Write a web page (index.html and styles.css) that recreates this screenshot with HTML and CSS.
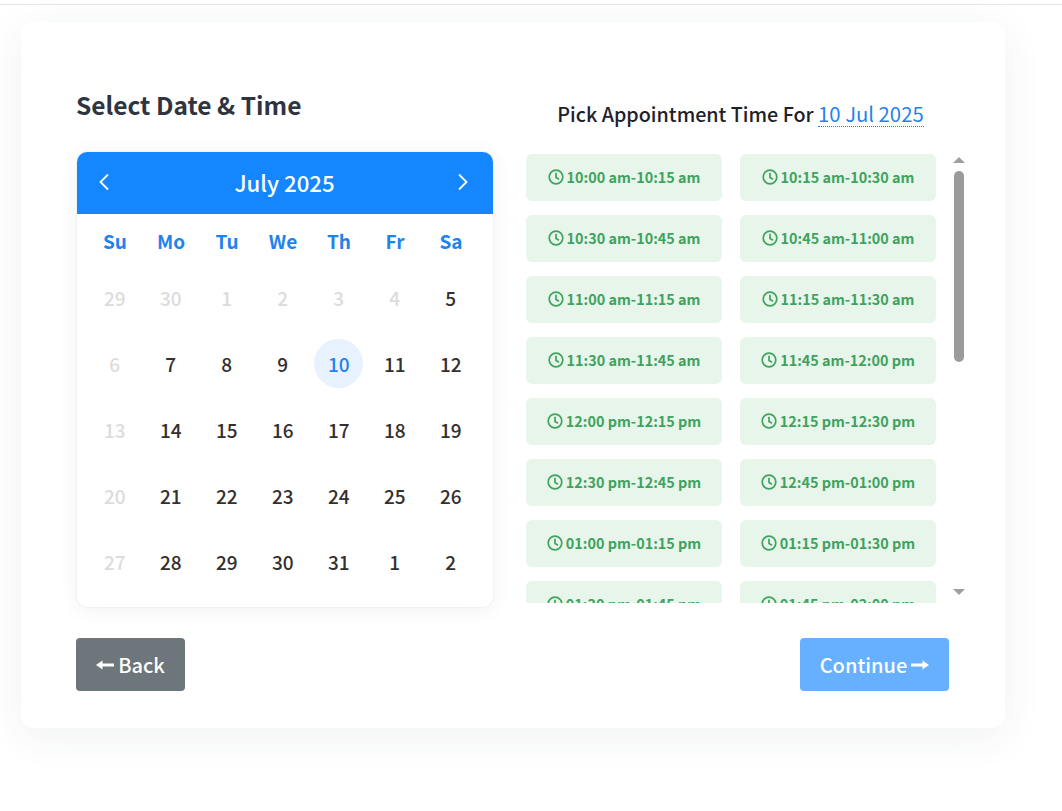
FILE: index.html
```html
<!DOCTYPE html>
<html lang="en">
<head>
<meta charset="utf-8">
<title>Select Date &amp; Time</title>
<link rel="stylesheet" href="styles.css">
</head>
<body>
<div class="topline"></div>
<main class="card">
  <div class="columns">
    <section class="left">
      <h2 class="title">Select Date &amp; Time</h2>
      <div class="calendar">
        <div class="cal-head">
          <svg class="chev" width="14" height="20" viewBox="0 0 14 20"><path d="M11 2.5 3.5 10 11 17.5" fill="none" stroke="#fff" stroke-width="1.8"/></svg>
          <span class="month">July 2025</span>
          <svg class="chev" width="14" height="20" viewBox="0 0 14 20"><path d="M3 2.5 10.5 10 3 17.5" fill="none" stroke="#fff" stroke-width="1.8"/></svg>
        </div>
        <div class="weekdays">
          <span>Su</span><span>Mo</span><span>Tu</span><span>We</span><span>Th</span><span>Fr</span><span>Sa</span>
        </div>
        <div class="days">
          <span class="off">29</span><span class="off">30</span><span class="off">1</span><span class="off">2</span><span class="off">3</span><span class="off">4</span><span>5</span>
          <span class="off">6</span><span>7</span><span>8</span><span>9</span><span class="sel">10</span><span>11</span><span>12</span>
          <span class="off">13</span><span>14</span><span>15</span><span>16</span><span>17</span><span>18</span><span>19</span>
          <span class="off">20</span><span>21</span><span>22</span><span>23</span><span>24</span><span>25</span><span>26</span>
          <span class="off">27</span><span>28</span><span>29</span><span>30</span><span>31</span><span>1</span><span>2</span>
        </div>
      </div>
    </section>
    <section class="right">
      <h3 class="pick">Pick Appointment Time For <span class="pick-date">10 Jul 2025</span></h3>
      <div class="slots-wrap">
        <div class="slots">
          <div class="slot"><svg class="clock" viewBox="0 0 16 16"><circle cx="8" cy="8" r="6.8"/><path d="M8 3.8V8.4L11 10.2"/></svg>10:00 am-10:15 am</div>
          <div class="slot"><svg class="clock" viewBox="0 0 16 16"><circle cx="8" cy="8" r="6.8"/><path d="M8 3.8V8.4L11 10.2"/></svg>10:15 am-10:30 am</div>
          <div class="slot"><svg class="clock" viewBox="0 0 16 16"><circle cx="8" cy="8" r="6.8"/><path d="M8 3.8V8.4L11 10.2"/></svg>10:30 am-10:45 am</div>
          <div class="slot"><svg class="clock" viewBox="0 0 16 16"><circle cx="8" cy="8" r="6.8"/><path d="M8 3.8V8.4L11 10.2"/></svg>10:45 am-11:00 am</div>
          <div class="slot"><svg class="clock" viewBox="0 0 16 16"><circle cx="8" cy="8" r="6.8"/><path d="M8 3.8V8.4L11 10.2"/></svg>11:00 am-11:15 am</div>
          <div class="slot"><svg class="clock" viewBox="0 0 16 16"><circle cx="8" cy="8" r="6.8"/><path d="M8 3.8V8.4L11 10.2"/></svg>11:15 am-11:30 am</div>
          <div class="slot"><svg class="clock" viewBox="0 0 16 16"><circle cx="8" cy="8" r="6.8"/><path d="M8 3.8V8.4L11 10.2"/></svg>11:30 am-11:45 am</div>
          <div class="slot"><svg class="clock" viewBox="0 0 16 16"><circle cx="8" cy="8" r="6.8"/><path d="M8 3.8V8.4L11 10.2"/></svg>11:45 am-12:00 pm</div>
          <div class="slot"><svg class="clock" viewBox="0 0 16 16"><circle cx="8" cy="8" r="6.8"/><path d="M8 3.8V8.4L11 10.2"/></svg>12:00 pm-12:15 pm</div>
          <div class="slot"><svg class="clock" viewBox="0 0 16 16"><circle cx="8" cy="8" r="6.8"/><path d="M8 3.8V8.4L11 10.2"/></svg>12:15 pm-12:30 pm</div>
          <div class="slot"><svg class="clock" viewBox="0 0 16 16"><circle cx="8" cy="8" r="6.8"/><path d="M8 3.8V8.4L11 10.2"/></svg>12:30 pm-12:45 pm</div>
          <div class="slot"><svg class="clock" viewBox="0 0 16 16"><circle cx="8" cy="8" r="6.8"/><path d="M8 3.8V8.4L11 10.2"/></svg>12:45 pm-01:00 pm</div>
          <div class="slot"><svg class="clock" viewBox="0 0 16 16"><circle cx="8" cy="8" r="6.8"/><path d="M8 3.8V8.4L11 10.2"/></svg>01:00 pm-01:15 pm</div>
          <div class="slot"><svg class="clock" viewBox="0 0 16 16"><circle cx="8" cy="8" r="6.8"/><path d="M8 3.8V8.4L11 10.2"/></svg>01:15 pm-01:30 pm</div>
          <div class="slot"><svg class="clock" viewBox="0 0 16 16"><circle cx="8" cy="8" r="6.8"/><path d="M8 3.8V8.4L11 10.2"/></svg>01:30 pm-01:45 pm</div>
          <div class="slot"><svg class="clock" viewBox="0 0 16 16"><circle cx="8" cy="8" r="6.8"/><path d="M8 3.8V8.4L11 10.2"/></svg>01:45 pm-02:00 pm</div>
        </div>
        <div class="scrollbar">
          <span class="arrow-up"></span>
          <span class="thumb"></span>
          <span class="arrow-down"></span>
        </div>
      </div>
    </section>
  </div>
  <div class="actions">
    <button class="btn back" type="button"><svg class="arrow" width="18" height="12" viewBox="0 0 18 12"><path d="M18 4.5H5V7.5H18ZM6.5 1.5 0 6 6.5 10.5Z" fill="#fff"/></svg>Back</button>
    <button class="btn next" type="button">Continue<svg class="arrow" width="18" height="12" viewBox="0 0 18 12"><path d="M0 4.5H13V7.5H0ZM11.5 1.5 18 6 11.5 10.5Z" fill="#fff"/></svg></button>
  </div>
</main>
</body>
</html>
```
FILE: styles.css
```css
* { box-sizing: border-box; }
html, body { margin: 0; padding: 0; }
body {
  background: #fff;
  font-family: "Noto Sans CJK SC", "Noto Sans", sans-serif;
  color: #2c3038;
  height: 811px;
  overflow: hidden;
}
.topline {
  height: 5px;
  background: #fff;
  border-bottom: 1px solid #e6e6e6;
}
.card {
  width: 984px;
  height: 706px;
  margin: 17px 0 0 21px;
  background: #fff;
  border-radius: 12px;
  box-shadow: 0 8px 40px rgba(40, 50, 60, .07);
  padding: 64px 56px 0 55px;
  display: flex;
  flex-direction: column;
}
.columns { display: flex; gap: 33px; }
.left { width: 417px; flex: none; padding-left: 1px; }
.right { width: 440px; flex: none; }
.title {
  margin: 0;
  font-size: 24.5px;
  font-weight: 600;
  line-height: 38px;
  height: 66px;
  margin-left: -1px;
  color: #2f3540;
}
.calendar {
  width: 416px;
  height: 455px;
  background: #fff;
  border-radius: 10px;
  box-shadow: 0 2px 20px rgba(40, 50, 60, .07), 0 0 0 1px rgba(40, 50, 60, .03);
}
.cal-head {
  height: 62px;
  background: #1486ff;
  border-radius: 10px 10px 0 0;
  display: flex;
  align-items: center;
  justify-content: space-between;
  padding: 0 23px 2px 20px;
  color: #fff;
}
.month { font-size: 22.2px; font-weight: 500; line-height: 30px; margin-left: 2px; }
.weekdays, .days {
  display: grid;
  grid-template-columns: repeat(7, 56px);
  padding-left: 10px;
}
.weekdays {
  height: 52px;
  align-items: center;
  color: #1f83ee;
  font-size: 19px;
  font-weight: 600;
  text-align: center;
}
.days {
  grid-auto-rows: 66px;
  font-size: 19px;
  font-weight: 500;
  color: #33302f;
  align-items: center;
  justify-items: center;
  margin-top: -2px;
  padding-left: 9.75px;
}
.days span {
  width: 49px;
  height: 49px;
  border-radius: 50%;
  display: flex;
  align-items: center;
  justify-content: center;
}
.days .off { color: #dcdcdc; }
.days .sel { background: #e7f2fe; color: #1f83ee; }
.pick {
  margin: 0;
  height: 68px;
  padding: 13px 11px 0 0;
  font-size: 19.7px;
  font-weight: 500;
  line-height: 30px;
  text-align: center;
  color: #1d2129;
}
.pick-date {
  color: #1f83ee;
  font-size: 20.3px;
  font-weight: 400;
  display: inline-block;
  line-height: 26px;
  border-bottom: 1px dotted #1f83ee;
}
.slots-wrap {
  display: flex;
  height: 451px;
  margin-top: -2px;
}
.slots {
  width: 410px;
  height: 451px;
  padding-top: 2px;
  overflow: hidden;
  display: grid;
  grid-template-columns: 196px 196px;
  grid-auto-rows: 47px;
  column-gap: 18px;
  row-gap: 14px;
  align-content: start;
}
.slot {
  background: #e8f5ea;
  border-radius: 6px;
  color: #3fa35f;
  font-size: 14.4px;
  font-weight: 600;
  display: flex;
  align-items: center;
  justify-content: center;
  gap: 3px;
  padding-bottom: 2px;
  white-space: nowrap;
}
.clock {
  width: 16px;
  height: 16px;
  fill: none;
  stroke: #3fa35f;
  stroke-width: 1.7;
}
.scrollbar {
  width: 30px;
  padding: 5px 0 0 16px;
  display: flex;
  flex-direction: column;
  align-items: center;
}
.arrow-up, .arrow-down { width: 0; height: 0; border-left: 6px solid transparent; border-right: 6px solid transparent; }
.arrow-up { border-bottom: 6px solid #a0a0a0; }
.arrow-down { border-top: 6px solid #a0a0a0; margin-top: 227px; }
.thumb { width: 10px; height: 191px; margin-top: 8px; background: #9b9b9b; border-radius: 5px; }
.actions {
  display: flex;
  justify-content: space-between;
  width: 873px;
  margin-top: 31px;
}
.btn {
  height: 53px;
  border: 0;
  border-radius: 4px;
  color: #fff;
  font-family: inherit;
  font-size: 20px;
  font-weight: 500;
  display: flex;
  align-items: center;
  justify-content: center;
  gap: 4px;
}
.back { width: 109px; background: #6c767b; }
.next { width: 149px; background: #66b0ff; }
.arrow { flex: none; }
```
